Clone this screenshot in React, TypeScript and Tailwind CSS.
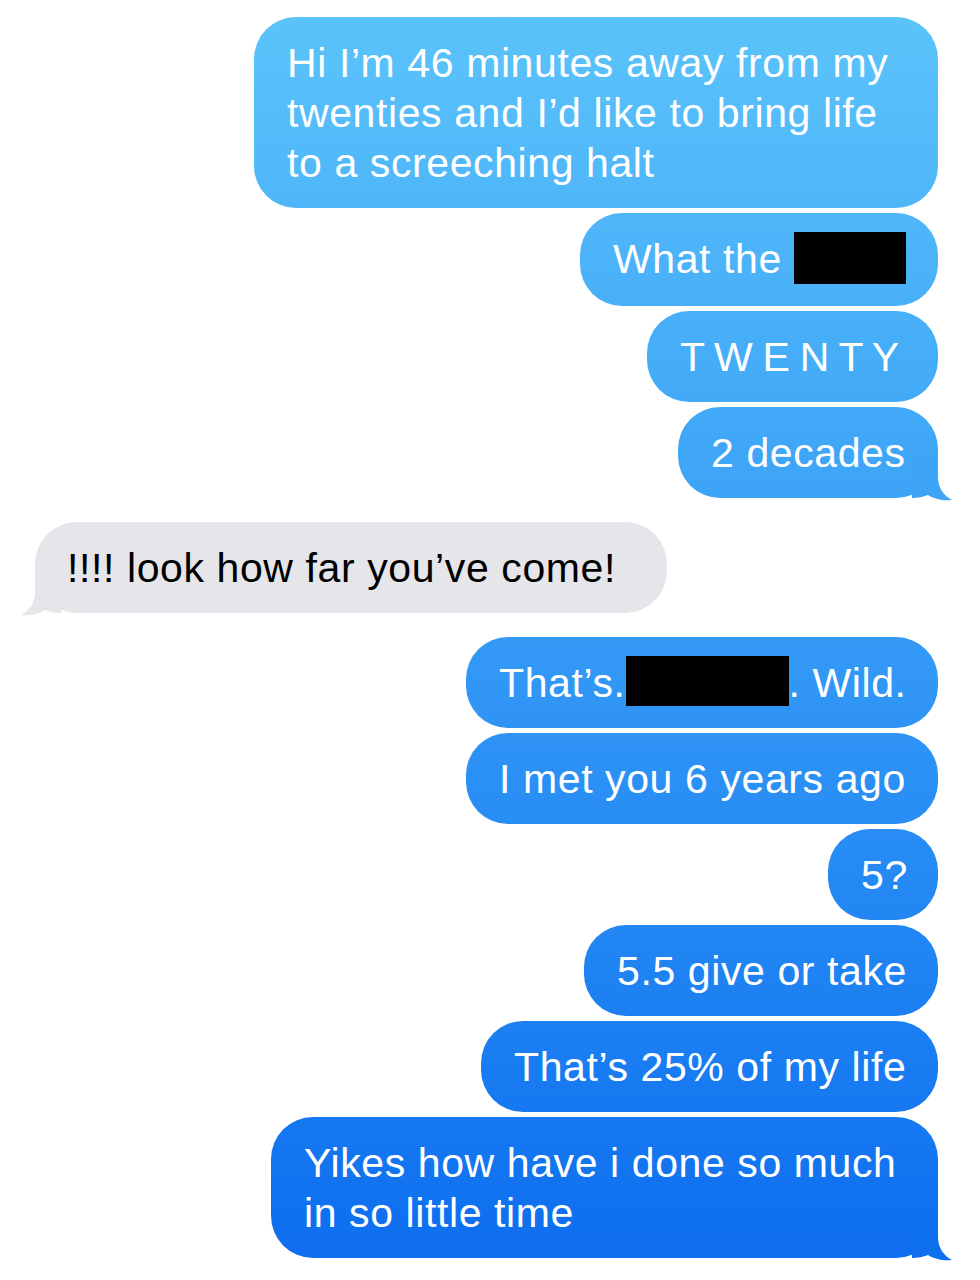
import React from "react";

const font = { fontFamily: '"Liberation Sans", Arial, sans-serif' };

function Tail({ color, left }: { color: string; left?: boolean }) {
  return (
    <svg
      viewBox="0 0 40 44"
      className={
        "absolute bottom-[-3px] w-[40px] h-[44px] " +
        (left ? "left-[-14px] -scale-x-100" : "right-[-14px]")
      }
    >
      <path
        d="M0 0 L26 0 L26 20 C26 31 32 39 40 43 C31 44 22 42 16 38 C11 40 6 41 0 41 Z"
        fill={color}
      />
    </svg>
  );
}

function Blue({
  w,
  children,
  tail,
}: {
  w: string;
  children: React.ReactNode;
  tail?: string;
}) {
  return (
    <div
      className={
        "relative rounded-[42px] px-[33px] py-[20.5px] text-white text-[41px] leading-[50px] tracking-[0.6px] whitespace-nowrap bg-fixed bg-linear-to-b from-[#5cc4fa] to-[#0c6cef] " +
        w
      }
    >
      {tail && <Tail color={tail} />}
      <div className="relative">{children}</div>
    </div>
  );
}

export default function App() {
  return (
    <div className="min-h-screen bg-white pt-[17px] pr-[42px] pl-[35px]" style={font}>
      <div className="flex flex-col items-end gap-[5px]">
        <Blue w="w-[684px]">
          Hi I’m 46 minutes away from my
          <br />
          twenties and I’d like to bring life
          <br />
          to a screeching halt
        </Blue>
        <Blue w="w-[358px]">
          What the{" "}
          <span className="inline-block align-top relative -top-[2px] w-[112px] h-[52px] bg-black" />
        </Blue>
        <Blue w="w-[291px]">
          <span className="tracking-[-0.8px]">T W E N T Y</span>
        </Blue>
        <Blue w="w-[260px]" tail="#3ea4f6">
          2 decades
        </Blue>
      </div>

      <div className="flex mt-[24px]">
        <div className="relative w-[632px] rounded-[42px] px-[32px] py-[20.5px] bg-[#e5e5ea] text-black text-[41px] leading-[50px] tracking-[0.6px] whitespace-nowrap">
          <Tail color="#e5e5ea" left />
          <div className="relative">!!!! look how far you’ve come!</div>
        </div>
      </div>

      <div className="flex flex-col items-end gap-[5px] mt-[24px]">
        <Blue w="w-[472px]">
          That’s.
          <span className="inline-block align-top relative -top-[1.5px] w-[163px] h-[50px] bg-black" />
          . Wild.
        </Blue>
        <Blue w="w-[472px]">I met you 6 years ago</Blue>
        <Blue w="w-[110px]">5?</Blue>
        <Blue w="w-[354px]">5.5 give or take</Blue>
        <Blue w="w-[457px]">That’s 25% of my life</Blue>
        <Blue w="w-[667px]" tail="#0e6fef">
          Yikes how have i done so much
          <br />
          in so little time
        </Blue>
      </div>
    </div>
  );
}
